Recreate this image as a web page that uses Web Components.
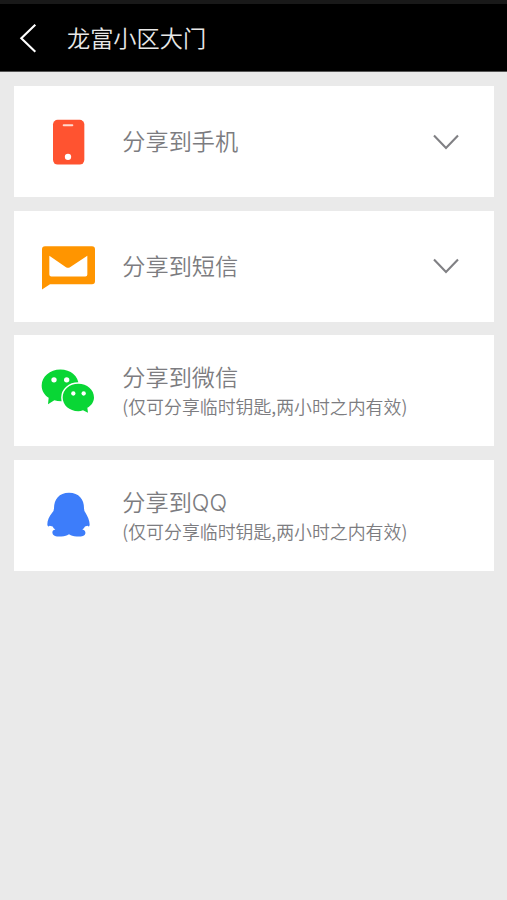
<!DOCTYPE html>
<html lang="zh-CN">
<head>
<meta charset="utf-8">
<title>龙富小区大门</title>
<style>
body{margin:0;background:#eaeaea;font-family:"Noto Sans CJK SC",sans-serif}
</style>
</head>
<body>
<share-page>
  <nav-bar slot="header">龙富小区大门</nav-bar>
  <share-card icon="phone" expandable>分享到手机</share-card>
  <share-card icon="mail" expandable>分享到短信</share-card>
  <share-card icon="wechat">分享到微信<span slot="note">(仅可分享临时钥匙,两小时之内有效)</span></share-card>
  <share-card icon="qq">分享到QQ<span slot="note">(仅可分享临时钥匙,两小时之内有效)</span></share-card>
</share-page>
<script>
class SharePage extends HTMLElement {
  constructor() {
    super();
    this.attachShadow({mode: 'open'}).innerHTML = `
      <style>
        :host{display:flex;flex-direction:column;min-height:100vh;background:#eaeaea}
        main{display:flex;flex-direction:column;gap:13.67px;padding:14px 13px 0 14px}
      </style>
      <slot name="header"></slot><main><slot></slot></main>`;
  }
}
class NavBar extends HTMLElement {
  constructor() {
    super();
    this.attachShadow({mode: 'open'}).innerHTML = `
      <style>
        :host{display:flex;align-items:center;box-sizing:border-box;height:72px;padding-left:18px;
          background:#000;border-top:4px solid #191919;border-bottom:1px solid #555;color:#e8e8e8}
        svg{width:20px;height:32px;flex:none}
        h1{margin:0 0 2px 29px;font-size:23.2px;font-weight:350;line-height:34px}
      </style>
      <svg viewBox="0 0 20 32"><path d="M17.3 2.7 3.3 16.2 17.3 29.7" fill="none" stroke="#fff" stroke-width="2.1"/></svg>
      <h1><slot></slot></h1>`;
  }
}
// Each glyph is drawn on a 240x210 grid; oy shifts it vertically in its cell.
const GLYPHS = {
  phone: {oy: 4.5, art: `
    <rect x="69" y="43" width="94" height="134" rx="14" fill="#ff5330"/>
    <rect x="98" y="56" width="32" height="6" rx="3" fill="#ffd9ce"/>
    <circle cx="114" cy="154" r="9.5" fill="#fff"/>`},
  mail: {oy: -11.5, art: `
    <path d="M45 34H186Q195 34 195 43V139Q195 148 186 148H60L36 164V43Q36 34 45 34Z" fill="#ff9500"/>
    <path d="M58 63 108 97Q114 101 120 97L172 63V119Q172 125 166 125H64Q58 125 58 119Z" fill="#fff"/>`},
  wechat: {oy: 2.5, art: `
    <path d="M91 43C60 43 35 64 35 91C35 107 43 119 56 128L54 147L73 135Q82 138 94 138C124 136 146 116 146 90C146 63 122 43 91 43Z" fill="#09d635"/>
    <circle cx="72" cy="74" r="8" fill="#fff"/><circle cx="110" cy="74" r="8" fill="#fff"/>
    <path d="M145 86C118 86 98 104 98 127C98 150 118 168 145 168Q152 168 159 165L174 173L172 158C184 151 192 140 192 127C192 104 171 86 145 86Z" fill="#09d635" stroke="#fff" stroke-width="9" paint-order="stroke" stroke-linejoin="round"/>
    <circle cx="130" cy="115" r="6.5" fill="#fff"/><circle cx="161" cy="115" r="6.5" fill="#fff"/>`},
  qq: {oy: 1.5, art: `
    <path d="M117 40C87 40 72 60 72 86Q72 93 67 99C57 110 52 124 52 135Q53 144 59 139L68 141Q70 147 76 150C67 152 66 157 68 163C70 171 84 172 94 171Q110 170 115 165H119Q124 170 140 171C151 172 165 170 166 162C167 157 165 152 157 150Q162 147 165 141L173 139Q178 144 179 136C179 124 173 110 166 99Q162 93 162 86C162 60 147 40 117 40Z" fill="#3d7dfa"/>`}
};
class ShareCard extends HTMLElement {
  constructor() {
    super();
    const {oy, art} = GLYPHS[this.getAttribute('icon')];
    const arrow = this.hasAttribute('expandable')
      ? `<svg class="arrow" viewBox="0 0 28 18"><path d="M2 2.5 14 15 26 2.5" fill="none" stroke="#808084" stroke-width="2.1"/></svg>` : '';
    this.attachShadow({mode: 'open'}).innerHTML = `
      <style>
        :host{display:flex;align-items:center;box-sizing:border-box;height:111px;padding:0 34px 0 16px;background:#fff;color:#7c7c80}
        .icon{width:80px;height:70px;flex:none}
        .text{flex:1;margin:0 0 3px 12.3px;white-space:nowrap;font-weight:350}
        .title{font-family:Inter,"Noto Sans CJK SC",sans-serif;font-size:23.2px;line-height:30px;padding-top:4px}
        .note{font-size:17.9px;line-height:26px}
        .arrow{width:28px;height:18px;flex:none}
      </style>
      <svg class="icon" viewBox="0 ${oy} 240 210">${art}</svg>
      <div class="text"><div class="title"><slot></slot></div><div class="note"><slot name="note"></slot></div></div>
      ${arrow}`;
    if (!this.querySelector('[slot=note]')) this.shadowRoot.querySelector('.note').remove();
  }
}
customElements.define('share-page', SharePage);
customElements.define('nav-bar', NavBar);
customElements.define('share-card', ShareCard);
</script>
</body>
</html>
